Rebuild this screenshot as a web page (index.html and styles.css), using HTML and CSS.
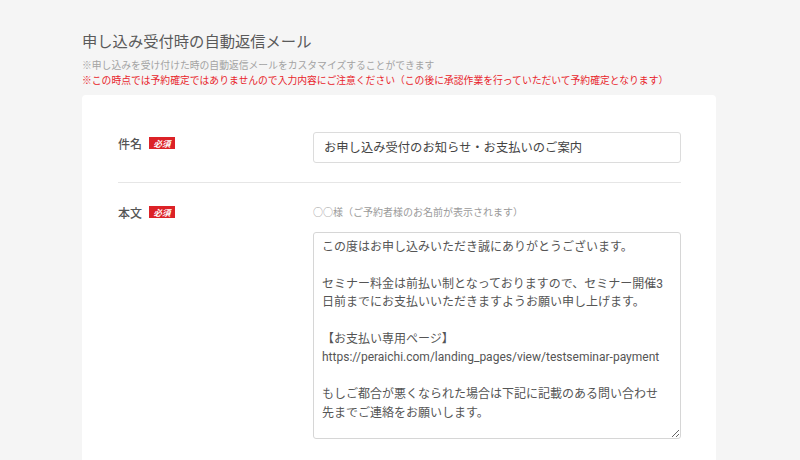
FILE: index.html
```html
<!DOCTYPE html>
<html lang="ja">
<head>
<meta charset="utf-8">
<link rel="stylesheet" href="styles.css">
</head>
<body>
<div class="page">
  <h1 class="title">申し込み受付時の自動返信メール</h1>
  <p class="note note-gray">※申し込みを受け付けた時の自動返信メールをカスタマイズすることができます</p>
  <p class="note note-red">※この時点では予約確定ではありませんので入力内容にご注意ください（この後に承認作業を行っていただいて予約確定となります）</p>
  <div class="card">
    <div class="row row-first">
      <div class="label"><span class="label-text">件名</span><span class="badge">必須</span></div>
      <div class="field">
        <div class="input">お申し込み受付のお知らせ・お支払いのご案内</div>
      </div>
    </div>
    <div class="row row-second">
      <div class="label"><span class="label-text">本文</span><span class="badge">必須</span></div>
      <div class="field">
        <div class="hint">○○様（ご予約者様のお名前が表示されます）</div>
        <textarea class="textarea">この度はお申し込みいただき誠にありがとうございます。

セミナー料金は前払い制となっておりますので、セミナー開催3
日前までにお支払いいただきますようお願い申し上げます。

【お支払い専用ページ】
https://peraichi.com/landing_pages/view/testseminar-payment

もしご都合が悪くなられた場合は下記に記載のある問い合わせ
先までご連絡をお願いします。</textarea>
      </div>
    </div>
  </div>
</div>
</body>
</html>
```

FILE: styles.css
```css
html, body {
  margin: 0;
  padding: 0;
  background: #f5f5f5;
  height: 100%;
  overflow: hidden;
}
body {
  font-family: "Noto Sans CJK JP", "Noto Sans", sans-serif;
  color: #555;
}
.page {
  padding: 30px 84px 0 82px;
}
.title {
  margin: 0;
  font-size: 15.3px;
  line-height: 20px;
  font-weight: 400;
  color: #5a5a5a;
}
.note {
  margin: 0;
  font-size: 9.8px;
  line-height: 15px;
}
.note-gray {
  margin-top: 7.5px;
  color: #a3a3a3;
}
.note-red {
  color: #e8242b;
}
.card {
  margin-top: 7.5px;
  background: #fff;
  border-radius: 4px;
  padding: 0 35px 0 36px;
  height: 400px;
}
.row {
  display: grid;
  grid-template-columns: 195px 1fr;
}
.row-first {
  padding-top: 37px;
  padding-bottom: 19px;
  border-bottom: 1px solid #e6e6e6;
}
.row-second {
  padding-top: 19px;
}
.label {
  display: flex;
  align-items: center;
  gap: 7px;
  height: 20px;
  margin-top: 1px;
}
.row-second .label {
  margin-top: 0;
}
.label-text {
  font-size: 12px;
  font-weight: 500;
  color: #555;
}
.badge {
  display: inline-flex;
  align-items: center;
  justify-content: center;
  width: 26px;
  height: 12px;
  background: #dc2227;
  color: #fff;
  font-size: 8.5px;
  font-weight: 700;
  font-style: italic;
  line-height: 12px;
}
.input {
  box-sizing: border-box;
  height: 31px;
  border: 1px solid #dcdcdc;
  border-radius: 3px;
  padding: 0 10px;
  font-size: 12.3px;
  line-height: 29px;
  color: #444;
}
.hint {
  margin-top: 3px;
  font-size: 10px;
  line-height: 14px;
  color: #9a9a9a;
}
.textarea {
  display: block;
  box-sizing: border-box;
  width: 100%;
  height: 207px;
  margin: 13px 0 0 0;
  border: 1px solid #d6d6d6;
  border-radius: 3px;
  padding: 5px 6px 0 8px;
  font-family: "Roboto", "Noto Sans CJK JP", sans-serif;
  font-size: 12px;
  line-height: 18.4px;
  color: #555;
  background: #fff;
  overflow: hidden;
  resize: vertical;
  white-space: pre-wrap;
}
```
